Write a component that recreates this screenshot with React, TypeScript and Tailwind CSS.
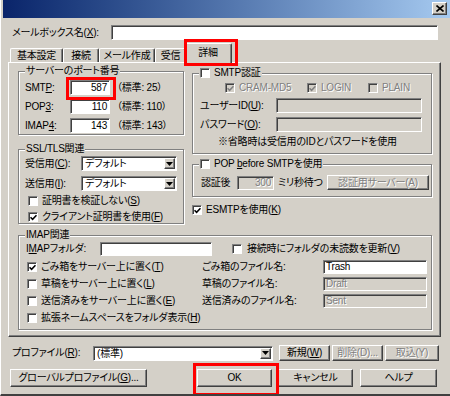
import React from "react";

const sunken =
  "border border-t-[#808080] border-l-[#808080] border-b-white border-r-white shadow-[inset_1px_1px_0_#404040]";
const raised =
  "border border-t-white border-l-white border-b-[#404040] border-r-[#404040] shadow-[inset_-1px_-1px_0_#808080]";
const dim = "text-[#808080] [text-shadow:1px_1px_0_#fff]";

function Check({ checked, disabled }: { checked?: boolean; disabled?: boolean }) {
  return (
    <span
      className={`inline-flex w-[10px] h-[10px] shrink-0 items-center justify-center ${sunken} ${
        disabled ? "bg-[#d4d0c8]" : "bg-white"
      }`}
    >
      {checked && (
        <svg width="7" height="7" viewBox="0 0 7 7">
          <path d="M0.5 3.2 L2.6 5.3 L6.5 1.2" stroke={disabled ? "#808080" : "#000"} strokeWidth="1.6" fill="none" />
        </svg>
      )}
    </span>
  );
}

function Field({
  w,
  value,
  disabled,
  right,
  h = "h-[15px]",
}: {
  w: string;
  value?: string;
  disabled?: boolean;
  right?: boolean;
  h?: string;
}) {
  return (
    <div
      className={`${w} ${h} ${sunken} ${disabled ? "bg-[#d4d0c8]" : "bg-white"} flex items-center px-[2px] ${
        right ? "justify-end" : ""
      }`}
    >
      <span className={disabled ? dim : ""}>{value}</span>
    </div>
  );
}

function Arrow() {
  return (
    <div className={`w-[11px] h-full bg-[#d4d0c8] ${raised} flex items-center justify-center`}>
      <svg width="7" height="4" viewBox="0 0 7 4">
        <path d="M0 0 H7 L3.5 4 Z" fill="#000" />
      </svg>
    </div>
  );
}

function Select({ w, value }: { w: string; value: string }) {
  return (
    <div className={`${w} h-[15px] ${sunken} bg-white flex items-stretch p-[1px]`}>
      <span className="flex-1 pl-[2px] leading-[12px]">{value}</span>
      <Arrow />
    </div>
  );
}

function Btn({ w, h, children, disabled }: { w: string; h: string; children: React.ReactNode; disabled?: boolean }) {
  return (
    <div className={`${w} ${h} ${raised} bg-[#d4d0c8] flex items-center justify-center ${disabled ? dim : ""}`}>
      {children}
    </div>
  );
}

function Group({
  title,
  className,
  children,
}: {
  title: React.ReactNode;
  className: string;
  children: React.ReactNode;
}) {
  return (
    <div className={`relative border border-[#808080] shadow-[inset_1px_1px_0_#fff,1px_1px_0_#fff] ${className}`}>
      <div className="absolute left-[6px] top-[-8px] bg-[#d4d0c8] px-[1px] flex items-center gap-[4px] leading-[14px]">
        {title}
      </div>
      {children}
    </div>
  );
}

function Tab({ w, label, active }: { w: string; label: string; active?: boolean }) {
  if (active) {
    return (
      <div
        className={`${w} h-[20px] -mb-[1px] -ml-[2px] relative z-10 bg-[#d4d0c8] border-t border-l border-t-white border-l-white border-r border-r-[#404040] shadow-[inset_-1px_0_0_#808080] rounded-t-[2px] flex items-center justify-center pb-[2px]`}
      >
        {label}
      </div>
    );
  }
  return (
    <div
      className={`${w} h-[14px] border-t border-l border-t-white border-l-white border-r border-r-[#404040] shadow-[inset_-1px_0_0_#808080] rounded-t-[2px] flex items-center justify-center`}
    >
      {label}
    </div>
  );
}

function RedBox({ className }: { className: string }) {
  return <div className={`absolute border-[3px] border-[#ff0000] z-20 ${className}`} />;
}

export default function App() {
  return (
    <div className="relative w-[450px] h-[396px] overflow-hidden whitespace-nowrap bg-[#d4d0c8] text-black text-[10px] tracking-[-0.2px] leading-[14px] font-['Liberation_Sans','Noto_Sans_CJK_JP',sans-serif] [font-feature-settings:'palt'] border-l border-l-white border-b-2 border-b-[#404040]">
      {/* title bar */}
      <div className="h-[18px] ml-[2px] bg-gradient-to-r from-[#0a246a] to-[#a6caf0] flex items-center justify-end pr-[3px]">
        <div className={`w-[15px] h-[13px] mb-[1px] bg-[#d4d0c8] ${raised} flex items-center justify-center`}>
          <svg width="8" height="7" viewBox="0 0 8 7">
            <path d="M0.5 0.5 L7.5 6.5 M7.5 0.5 L0.5 6.5" stroke="#000" strokeWidth="1.6" />
          </svg>
        </div>
      </div>

      {/* mailbox name */}
      <div className="mt-[7px] flex items-center h-[15px]">
        <span className="ml-[11px] w-[99px]">
          メールボックス名(<u>X</u>):
        </span>
        <Field w="w-[327px]" />
      </div>

      {/* tabs */}
      <div className="mt-[3px] ml-[9px] h-[19px] flex items-end">
        <Tab w="w-[53px]" label="基本設定" />
        <Tab w="w-[36px]" label="接続" />
        <Tab w="w-[56px]" label="メール作成" />
        <Tab w="w-[31px]" label="受信" />
        <Tab w="w-[48px]" label="詳細" active />
      </div>

      {/* panel */}
      <div className="ml-[7px] w-[433px] h-[275px] border border-t-white border-l-white border-r-[#404040] border-b-[#404040] shadow-[inset_-1px_-1px_0_#808080] pl-[9px] pt-[8px]">
        <div className="flex gap-[8px]">
          {/* left column */}
          <div className="w-[166px] flex flex-col">
            <Group title="サーバーのポート番号" className="h-[64px] pl-[6px] pt-[8px] flex flex-col gap-[4px]">
              {[
                ["SMT", "P", "587", "25"],
                ["POP", "3", "110", "110"],
                ["IMAP", "4", "143", "143"],
              ].map(([a, b, v, s]) => (
                <div key={a} className="flex items-center h-[15px]">
                  <span className="w-[45px]">
                    {a}
                    <u>{b}</u>:
                  </span>
                  <Field w="w-[40px]" value={v} right />
                  <span className="ml-[7px]">（標準: {s}）</span>
                </div>
              ))}
            </Group>

            <Group title="SSL/TLS関連" className="mt-[14px] h-[75px] pt-[6px] flex flex-col">
              <div className="flex items-center h-[15px] pl-[6px]">
                <span className="w-[56px]">
                  受信用(<u>C</u>):
                </span>
                <Select w="w-[96px]" value="デフォルト" />
              </div>
              <div className="flex items-center h-[15px] pl-[6px] mt-[5px]">
                <span className="w-[56px]">
                  送信用(<u>I</u>):
                </span>
                <Select w="w-[96px]" value="デフォルト" />
              </div>
              <div className="flex items-center h-[14px] pl-[9px] mt-[3px] gap-[4px]">
                <Check />
                <span>
                  証明書を検証しない(<u>S</u>)
                </span>
              </div>
              <div className="flex items-center h-[14px] pl-[9px] mt-[2px] gap-[4px]">
                <Check checked />
                <span>
                  クライアント証明書を使用(<u>F</u>)
                </span>
              </div>
            </Group>
          </div>

          {/* right column */}
          <div className="w-[240px] mt-[2px] flex flex-col">
            <Group
              title={
                <>
                  <Check />
                  <span>SMTP認証</span>
                </>
              }
              className="h-[81px] pt-[7px] flex flex-col"
            >
              <div className="flex items-center h-[14px] pl-[32px]">
                <div className="w-[82px] flex items-center gap-[4px]">
                  <Check checked disabled />
                  <span className={dim}>CRAM-MD5</span>
                </div>
                <div className="w-[61px] flex items-center gap-[4px]">
                  <Check checked disabled />
                  <span className={dim}>LOGIN</span>
                </div>
                <div className="flex items-center gap-[4px]">
                  <Check disabled />
                  <span className={dim}>PLAIN</span>
                </div>
              </div>
              <div className="flex items-center h-[15px] pl-[7px] mt-[3px]">
                <span className="w-[76px]">
                  ユーザーID(<u>U</u>):
                </span>
                <Field w="w-[146px]" disabled />
              </div>
              <div className="flex items-center h-[15px] pl-[7px] mt-[4px]">
                <span className="w-[76px]">
                  パスワード(<u>O</u>):
                </span>
                <Field w="w-[146px]" disabled />
              </div>
              <div className="h-[14px] pl-[25px] mt-[3px] flex items-center">※省略時は受信用のIDとパスワードを使用</div>
            </Group>

            <Group
              title={
                <>
                  <Check />
                  <span>
                    POP <u>b</u>efore SMTPを使用
                  </span>
                </>
              }
              className="mt-[10px] h-[33px] pl-[8px] pt-[10px]"
            >
              <div className="flex items-center h-[15px]">
                <span className="w-[36px]">認証後</span>
                <Field w="w-[37px]" h="h-[14px]" value="300" right disabled />
                <span className="ml-[4px] w-[49px]">ミリ秒待つ</span>
                <Btn w="w-[102px]" h="h-[15px]" disabled>
                  認証用サーバー(A)
                </Btn>
              </div>
            </Group>

            <div className="mt-[6px] h-[14px] flex items-center gap-[4px]">
              <Check checked />
              <span>
                ESMTPを使用(<u>K</u>)
              </span>
            </div>
          </div>
        </div>

        {/* IMAP */}
        <Group title="IMAP関連" className="mt-[11px] w-[414px] h-[95px] pt-[6px] flex flex-col">
          <div className="flex items-center h-[14px] pl-[7px]">
            <span className="w-[74px]">
              I<u>M</u>APフォルダ:
            </span>
            <Field w="w-[112px]" h="h-[14px]" />
            <div className="ml-[20px] flex items-center gap-[5px]">
              <Check />
              <span>
                接続時にフォルダの未読数を更新(<u>V</u>)
              </span>
            </div>
          </div>
          <div className="mt-[4px] flex flex-col gap-[3px] pl-[8px]">
            {[
              ["ごみ箱をサーバー上に置く", "T", true, "ごみ箱のファイル名:", "Trash", false],
              ["草稿をサーバー上に置く", "L", false, "草稿のファイル名:", "Draft", true],
              ["送信済みをサーバー上に置く", "E", false, "送信済みのファイル名:", "Sent", true],
            ].map(([t, k, c, l, v, d]) => (
              <div key={k as string} className="flex items-center h-[14px]">
                <div className="w-[175px] flex items-center gap-[4px]">
                  <Check checked={c as boolean} />
                  <span>
                    {t}(<u>{k}</u>)
                  </span>
                </div>
                <span className="w-[121px]">{l}</span>
                <Field w="w-[104px]" h="h-[14px]" value={v as string} disabled={d as boolean} />
              </div>
            ))}
            <div className="flex items-center h-[14px] gap-[4px]">
              <Check />
              <span>
                拡張ネームスペースをフォルダ表示(<u>H</u>)
              </span>
            </div>
          </div>
        </Group>
      </div>

      {/* profile row */}
      <div className="mt-[8px] flex items-center h-[16px]">
        <span className="ml-[11px] w-[81px]">
          プロファイル(<u>R</u>):
        </span>
        <Select w="w-[180px]" value="(標準)" />
        <div className="ml-[6px] flex gap-[2px]">
          <Btn w="w-[51px]" h="h-[16px]">
            新規(<u>W</u>)
          </Btn>
          <Btn w="w-[51px]" h="h-[16px]" disabled>
            削除(D)...
          </Btn>
          <Btn w="w-[54px]" h="h-[16px]" disabled>
            取込(Y)
          </Btn>
        </div>
      </div>

      {/* bottom buttons */}
      <div className="mt-[8px] flex items-center h-[18px]">
        <div className="ml-[9px]">
          <Btn w="w-[137px]" h="h-[18px]">
            グローバルプロファイル(<u>G</u>)...
          </Btn>
        </div>
        <div className="ml-[50px] flex">
          <Btn w="w-[75px]" h="h-[18px]">
            OK
          </Btn>
          <div className="ml-[6px]">
            <Btn w="w-[75px]" h="h-[18px]">
              キャンセル
            </Btn>
          </div>
          <div className="ml-[7px]">
            <Btn w="w-[77px]" h="h-[18px]">
              ヘルプ
            </Btn>
          </div>
        </div>
      </div>

      <RedBox className="left-[65px] top-[77px] w-[50px] h-[23px]" />
      <RedBox className="left-[183px] top-[39px] w-[54px] h-[27px]" />
      <RedBox className="left-[192px] top-[363px] w-[86px] h-[33px]" />
    </div>
  );
}
